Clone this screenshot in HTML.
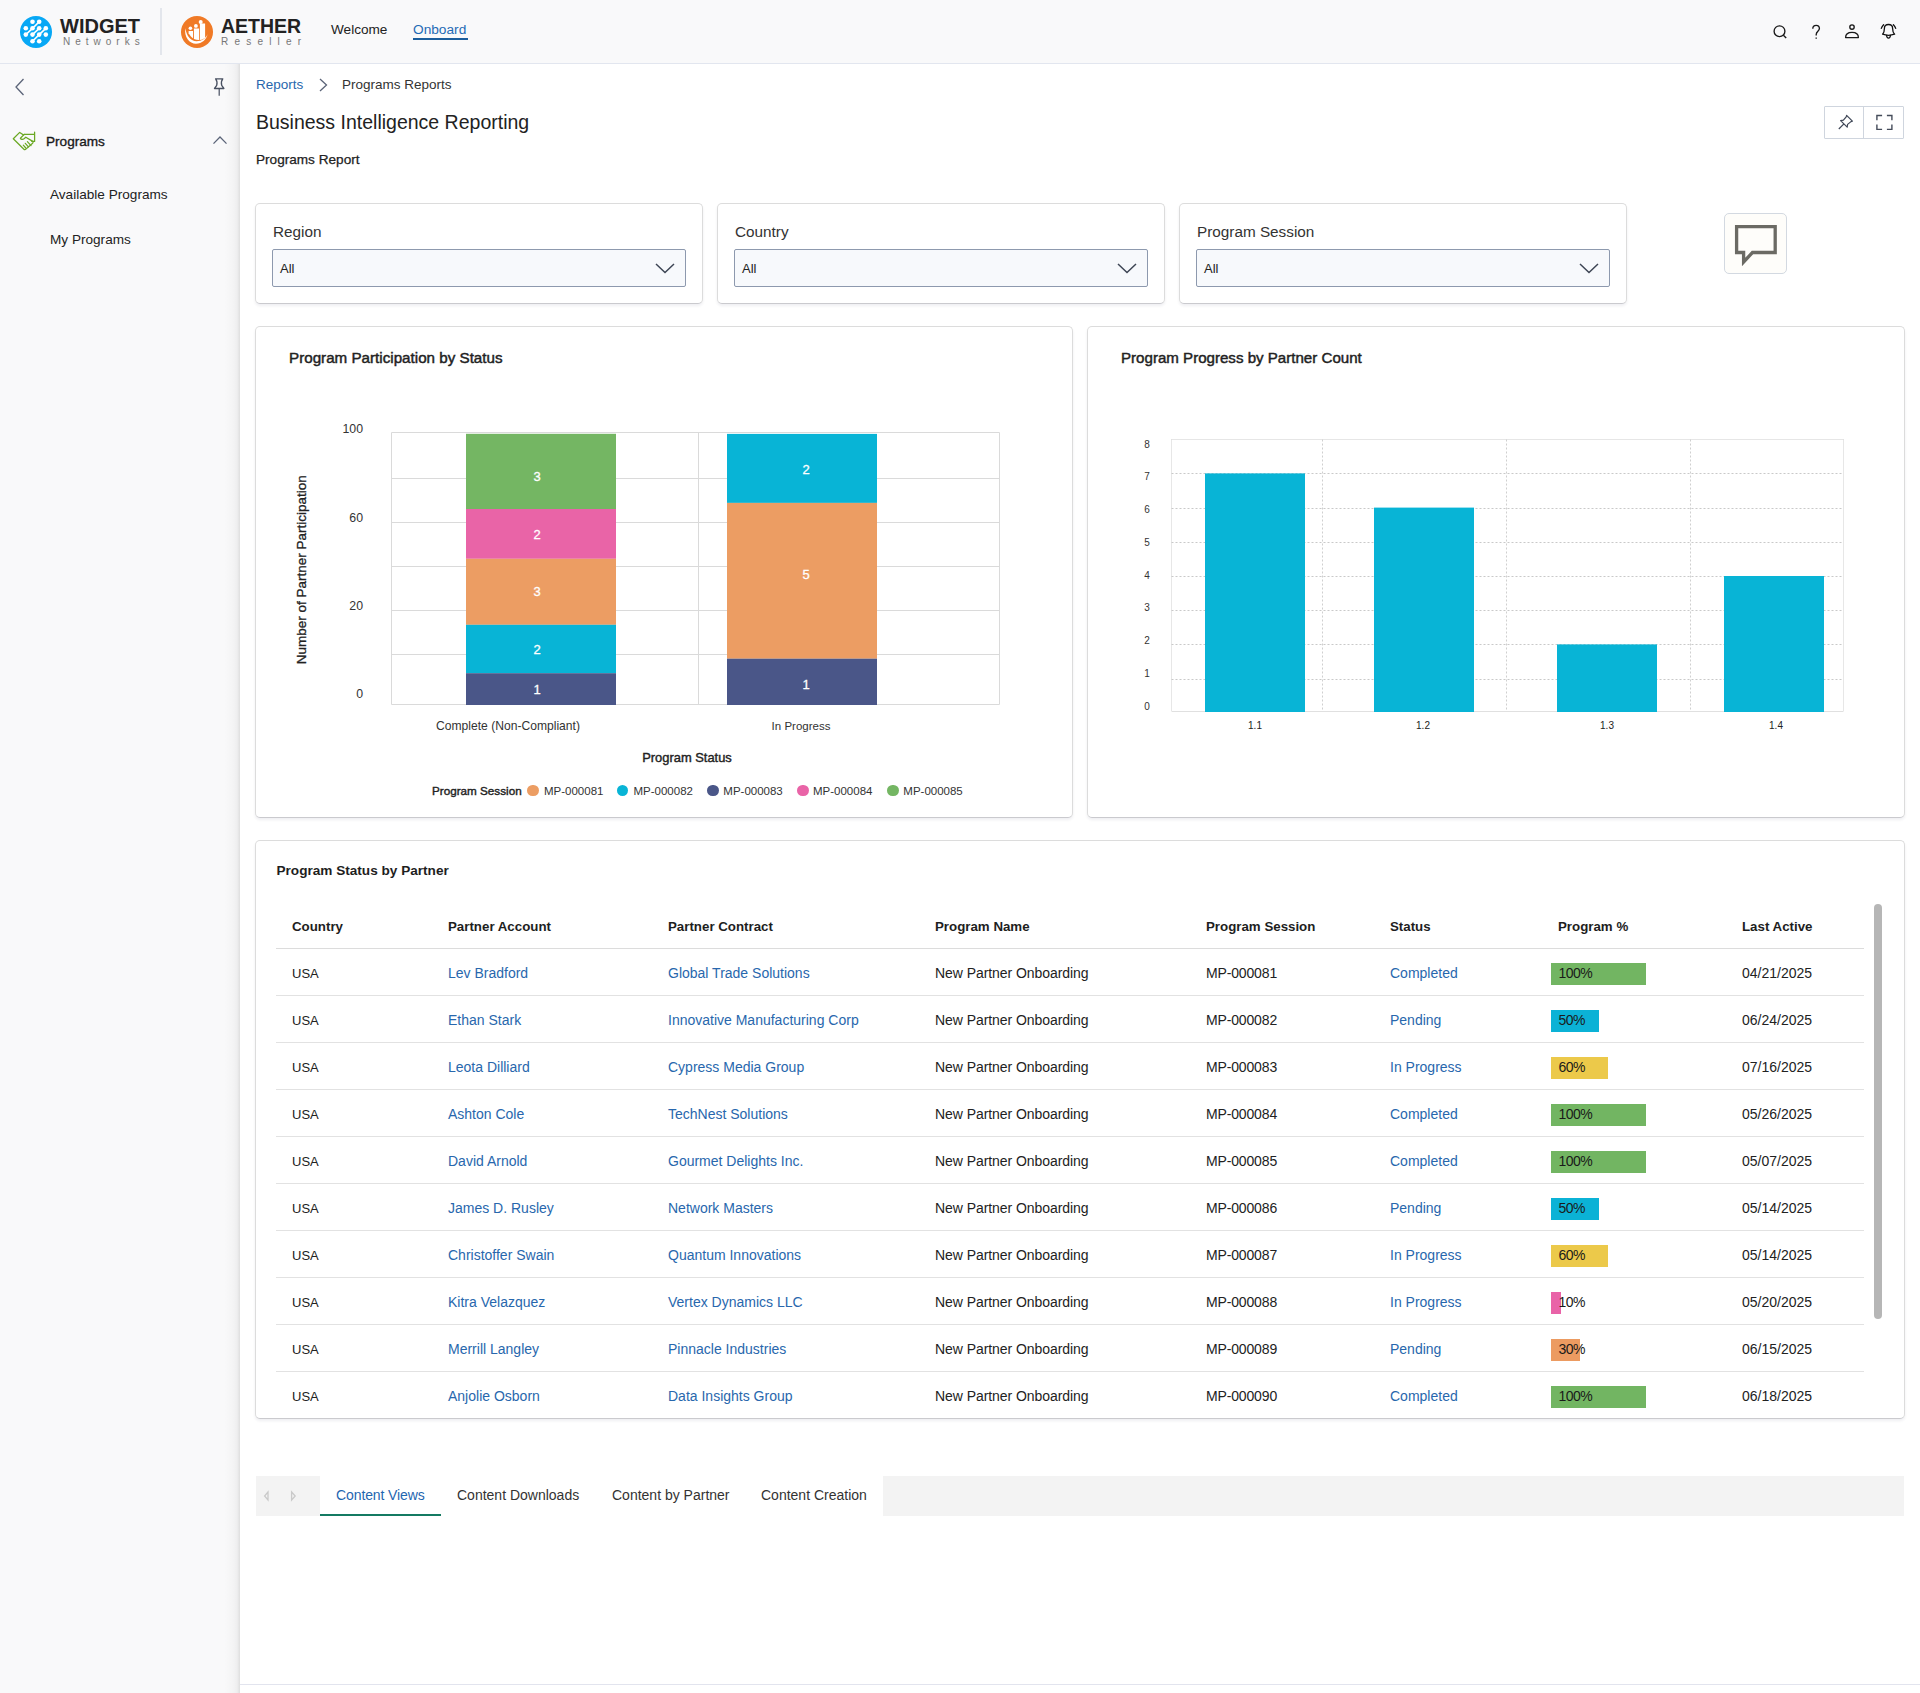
<!DOCTYPE html>
<html><head><meta charset="utf-8">
<style>
*{box-sizing:border-box;margin:0;padding:0}
html,body{width:1920px;height:1693px;overflow:hidden;background:#fff;font-family:"Liberation Sans",sans-serif;color:#222}
.abs{position:absolute}
#header{position:absolute;left:0;top:0;width:1920px;height:64px;background:#f9f9fa;border-bottom:1px solid #e2e6ef}
#sidebar{position:absolute;left:0;top:64px;width:240px;height:1629px;background:#f9f9fa}
#sbshadow{position:absolute;left:224px;top:64px;width:16px;height:1629px;background:linear-gradient(to right,rgba(0,0,0,0),rgba(0,0,0,.02) 55%,rgba(0,0,0,.045) 82%,rgba(0,0,0,.11))}
.t{position:absolute;white-space:nowrap;line-height:1}
.card{position:absolute;background:#fff;border:1px solid #dcdcdc;border-bottom-color:#cacace;border-radius:5px;box-shadow:0 2px 3px rgba(30,30,70,.07)}
.sel{position:absolute;left:16px;top:45px;height:38px;background:#f7f9fc;border:1px solid #8d99ae;border-radius:2px}
.sel span{position:absolute;left:7px;top:11px;font-size:13px;color:#222}
.sel svg{position:absolute;right:10px;top:13px}
.flabel{position:absolute;left:17px;top:19.6px;font-size:15.3px;color:#333;line-height:1;white-space:nowrap}
</style></head><body>
<div id="header">
  <svg class="abs" style="left:20px;top:16px" width="32" height="32" viewBox="0 0 32 32">
    <circle cx="16" cy="16" r="16" fill="#08a8f5"/>
    <g stroke="#fff" stroke-width="1.6" fill="none">
      <path d="M5.8 18.6 L12.5 12.3 L19.2 5.7"/>
      <path d="M12.5 25.2 L19.2 18.6 L25.8 12.3"/>
      <path d="M12.5 18.6 L19.2 12.3"/>
    </g>
    <g fill="#fff">
      <circle cx="12.5" cy="5.7" r="2.3"/><circle cx="19.2" cy="5.7" r="2.3"/>
      <circle cx="5.8" cy="12.3" r="2.3"/><circle cx="12.5" cy="12.3" r="2.3"/><circle cx="19.2" cy="12.3" r="2.3"/><circle cx="25.8" cy="12.3" r="2.3"/>
      <circle cx="5.8" cy="18.6" r="2.3"/><circle cx="12.5" cy="18.6" r="2.3"/><circle cx="19.2" cy="18.6" r="2.3"/><circle cx="25.8" cy="18.6" r="2.3"/>
      <circle cx="12.5" cy="25.2" r="2.3"/><circle cx="19.2" cy="25.2" r="2.3"/>
    </g>
  </svg>
  <div class="t" style="left:60px;top:16px;font-size:20px;font-weight:bold;color:#222">WIDGET</div>
  <div class="t" style="left:63px;top:37px;font-size:10px;letter-spacing:5px;color:#777">Networks</div>
  <div class="abs" style="left:160px;top:8px;width:2px;height:47px;background:#e3e6ec"></div>
  <svg class="abs" style="left:181px;top:16px" width="32" height="32" viewBox="0 0 32 32">
    <circle cx="16" cy="16" r="16" fill="#f07a26"/>
    <path d="M4.4 12.3 C2.8 21 8.5 27.8 15 27.8 C21 27.8 25.5 23.5 26.7 17.8 C25 22.4 21 25.2 15.5 25.2 C10 25.2 5.6 20.5 4.4 12.3Z" fill="#fff"/>
    <g fill="#fff">
      <path d="M7.6 15.1 H12 V22.2 C10.2 20.8 8.6 19 7.6 17.2Z"/>
      <path d="M12.9 12.4 H18.1 V24 C16.2 24 14.5 23.6 12.9 23Z"/>
      <path d="M18.9 7.4 H24.1 V21.8 C22.8 23 21 23.8 18.9 24Z"/>
      <circle cx="9.4" cy="12.3" r="1.8"/><circle cx="14.9" cy="9.9" r="1.9"/><circle cx="19.7" cy="6" r="2"/>
    </g>
  </svg>
  <div class="t" style="left:221px;top:16.5px;font-size:19.5px;font-weight:bold;color:#222">AETHER</div>
  <div class="t" style="left:221px;top:37px;font-size:10px;letter-spacing:6.2px;color:#777">Reseller</div>
  <div class="t" style="left:331px;top:22.5px;font-size:13.6px;color:#222">Welcome</div>
  <div class="t" style="left:413px;top:22.5px;font-size:13.7px;color:#1f6ab5">Onboard</div>
  <div class="abs" style="left:413px;top:38px;width:55px;height:2px;background:#1b5d9c"></div>
  <!-- right icons -->
  <svg class="abs" style="left:1770px;top:22px" width="20" height="20" viewBox="0 0 20 20" fill="none" stroke="#1a1a1a" stroke-width="1.35">
    <circle cx="9.5" cy="9.2" r="5.4"/><path d="M13.4 13.2 L16.2 16"/>
  </svg>
  <svg class="abs" style="left:1806px;top:22px" width="20" height="20" viewBox="0 0 20 20" fill="none" stroke="#1a1a1a" stroke-width="1.35">
    <path d="M6.8 6.8 C6.8 4.6 8.3 3.4 10.2 3.4 C12.2 3.4 13.4 4.8 13.4 6.6 C13.4 9 10.2 9.6 10.2 12.4 V13.4"/><path d="M10.2 15.6 V16.8"/>
  </svg>
  <svg class="abs" style="left:1842px;top:22px" width="20" height="20" viewBox="0 0 20 20" fill="none" stroke="#1a1a1a" stroke-width="1.35">
    <circle cx="10" cy="5" r="2.2"/><path d="M3.6 15.6 C3.6 11.6 6.6 10.4 10 10.4 C13.4 10.4 16.4 11.6 16.4 15.6 Z" stroke-linejoin="round"/>
  </svg>
  <svg class="abs" style="left:1876px;top:18px" width="26" height="26" viewBox="1876 18 26 26" fill="none" stroke="#111" stroke-width="1.3" stroke-linejoin="round" stroke-linecap="round">
    <path d="M1882.6 34.2 C1884 32.6 1884.4 30 1884.4 28.4 C1884.4 25.9 1886 24.5 1888.5 24.5 C1891 24.5 1892.6 25.9 1892.6 28.4 C1892.6 30 1893 32.6 1894.6 34.2 C1891 35.5 1886 35.5 1882.6 34.2Z"/>
    <path d="M1886.6 35.3 C1886.7 37.1 1887.4 38.1 1888.5 38.1 C1889.6 38.1 1890.3 37.1 1890.4 35.3"/>
    <path d="M1883.6 24.7 C1882.6 25.7 1881.7 27 1881.3 28.4 M1893.4 24.7 C1894.4 25.7 1895.3 27 1895.7 28.4"/>
  </svg>
</div>
<div id="sidebar">
  <svg class="abs" style="left:14px;top:14px" width="12" height="18" viewBox="0 0 12 18" fill="none" stroke="#5b6478" stroke-width="1.3"><path d="M9.5 1 L2 9 L9.5 17"/></svg>
  <svg class="abs" style="left:205px;top:8px" width="30" height="30" viewBox="205 72 30 30" fill="none" stroke="#485061" stroke-width="1.3" stroke-linejoin="round">
    <path d="M215.6 78.8 H222.8 C221.5 80.4 221.2 83.6 221.7 85.4 L223.9 88.5 H214.5 L216.7 85.4 C217.2 83.6 216.9 80.4 215.6 78.8Z"/>
    <path d="M219.2 88.8 V95.8" stroke-width="1.2"/>
  </svg>
  <svg class="abs" style="left:8px;top:62px" width="32" height="30" viewBox="8 126 32 30" fill="none" stroke="#6aa823" stroke-width="1.25" stroke-linejoin="round" stroke-linecap="round">
    <path d="M23.6 135.1 L19.7 132.4 L13.3 138.8 L23.9 149.2 C24.5 149.8 25.4 149.7 25.9 149.1 L32.6 143.3 C33.3 142.6 33.2 141.7 32.4 141.1 L25.8 137.3"/>
    <path d="M24.2 134.4 L20.4 138.3 C21.2 139.5 22.8 139.7 24 138.8 L25.8 137.3"/>
    <path d="M24.2 134.3 H34.5 M34.6 132 V141.4 H31.8"/>
    <path d="M23.3 145.2 L25.8 148 M25.3 143.3 L28.4 146.8 M27.4 141.6 L31 145.6"/>
  </svg>
  <div class="t" style="left:46px;top:71px;font-size:13.6px;color:#1a1a1a;-webkit-text-stroke:.35px #1a1a1a">Programs</div>
  <svg class="abs" style="left:212px;top:71px" width="16" height="10" viewBox="0 0 16 10" fill="none" stroke="#5b6478" stroke-width="1.3"><path d="M1.5 8.6 L8 2 L14.5 8.6"/></svg>
  <div class="t" style="left:50px;top:124px;font-size:13.6px;color:#222">Available Programs</div>
  <div class="t" style="left:50px;top:169px;font-size:13.6px;color:#222">My Programs</div>
</div>

<div id="sbshadow"></div>
<div class="abs" style="left:240px;top:64px;width:1680px;height:1629px;background:#fff"></div>
<!-- breadcrumb -->
<div class="t" style="left:256px;top:78px;font-size:13.5px;color:#2867ad">Reports</div>
<svg class="abs" style="left:316px;top:77px" width="14" height="16" viewBox="0 0 14 16" fill="none" stroke="#5b6478" stroke-width="1.3"><path d="M4 2 L10.5 8 L4 14"/></svg>
<div class="t" style="left:342px;top:78px;font-size:13.5px;color:#333">Programs Reports</div>
<div class="t" style="left:256px;top:113px;font-size:19.5px;color:#222">Business Intelligence Reporting</div>
<div class="t" style="left:256px;top:152.5px;font-size:13.6px;color:#222;-webkit-text-stroke:.25px #222">Programs Report</div>
<!-- pin/expand -->
<div class="abs" style="left:1824px;top:106px;width:80px;height:33px;border:1px solid #cfd5de;border-radius:1px;background:#fff"></div>
<div class="abs" style="left:1863px;top:107px;width:1px;height:31px;background:#cfd5de"></div>
<svg class="abs" style="left:1835px;top:113px" width="20" height="20" viewBox="0 0 20 20" fill="none" stroke="#3e4656" stroke-width="1.2" stroke-linejoin="round">
  <path d="M11.6 2.4 L17.4 8.2 L16 8.6 L12.6 11.4 L12.2 14.2 L5.6 7.6 L8.4 7.2 L11.2 3.8 Z"/><path d="M8.9 10.9 L3.8 16"/>
</svg>
<svg class="abs" style="left:1874px;top:112px" width="20" height="20" viewBox="0 0 20 20" fill="none" stroke="#454c5a" stroke-width="1.4">
  <path d="M2.9 8.3 V3.5 H8.1 M12.9 3.5 H17.9 V8.3 M17.9 12.6 V17.4 H12.9 M8.1 17.4 H2.9 V12.6"/>
</svg>
<!-- filters -->
<div class="card" style="left:255px;top:203px;width:448px;height:101px">
  <div class="flabel">Region</div>
  <div class="sel" style="width:414px"><span>All</span><svg width="20" height="11" viewBox="0 0 20 11" fill="none" stroke="#3d4554" stroke-width="1.5"><path d="M1 1 L10 9.5 L19 1"/></svg></div>
</div>
<div class="card" style="left:717px;top:203px;width:448px;height:101px">
  <div class="flabel">Country</div>
  <div class="sel" style="width:414px"><span>All</span><svg width="20" height="11" viewBox="0 0 20 11" fill="none" stroke="#3d4554" stroke-width="1.5"><path d="M1 1 L10 9.5 L19 1"/></svg></div>
</div>
<div class="card" style="left:1179px;top:203px;width:448px;height:101px">
  <div class="flabel">Program Session</div>
  <div class="sel" style="width:414px"><span>All</span><svg width="20" height="11" viewBox="0 0 20 11" fill="none" stroke="#3d4554" stroke-width="1.5"><path d="M1 1 L10 9.5 L19 1"/></svg></div>
</div>
<div class="abs" style="left:1724px;top:213px;width:63px;height:61px;border:1px solid #d3d9e1;border-radius:5px;background:#fefdfa"></div>
<svg class="abs" style="left:1724px;top:213px" width="63" height="61" viewBox="1724 213 63 61" fill="none" stroke="#6b6a64" stroke-width="3.3" stroke-linejoin="miter">
  <path d="M1736.6 226.6 H1775.2 V252.5 H1752.5 L1743.6 262 V252.5 H1736.6 Z"/>
</svg>
<div class="card" style="left:255px;top:326px;width:818px;height:492px"></div>
<div class="t" style="left:289px;top:350px;font-size:15.2px;color:#222;-webkit-text-stroke:.45px #222">Program Participation by Status</div>
<svg class="abs" style="left:256px;top:326px" width="817" height="491" viewBox="256 326 817 491">
<line x1="391.5" y1="432.5" x2="999.5" y2="432.5" stroke="#dadada" stroke-width="1"/>
<line x1="391.5" y1="478.5" x2="999.5" y2="478.5" stroke="#dadada" stroke-width="1"/>
<line x1="391.5" y1="522.5" x2="999.5" y2="522.5" stroke="#dadada" stroke-width="1"/>
<line x1="391.5" y1="566.5" x2="999.5" y2="566.5" stroke="#dadada" stroke-width="1"/>
<line x1="391.5" y1="610.5" x2="999.5" y2="610.5" stroke="#dadada" stroke-width="1"/>
<line x1="391.5" y1="654.5" x2="999.5" y2="654.5" stroke="#dadada" stroke-width="1"/>
<line x1="391.5" y1="704.5" x2="999.5" y2="704.5" stroke="#dadada" stroke-width="1"/>
<line x1="391.5" y1="432.5" x2="391.5" y2="704.5" stroke="#dadada" stroke-width="1"/>
<line x1="698.5" y1="432.5" x2="698.5" y2="704.5" stroke="#dadada" stroke-width="1"/>
<line x1="999.5" y1="432.5" x2="999.5" y2="704.5" stroke="#dadada" stroke-width="1"/>
<rect x="466" y="433.8" width="150" height="75.19999999999999" fill="#74b663"/>
<rect x="466" y="509" width="150" height="49.799999999999955" fill="#e964a7"/>
<rect x="466" y="558.8" width="150" height="66.0" fill="#ec9d63"/>
<rect x="466" y="624.8" width="150" height="48.40000000000009" fill="#08b4d6"/>
<rect x="466" y="673.2" width="150" height="31.799999999999955" fill="#4a5688"/>
<rect x="727" y="433.9" width="150" height="69.0" fill="#08b4d6"/>
<rect x="727" y="502.9" width="150" height="155.80000000000007" fill="#ec9d63"/>
<rect x="727" y="658.7" width="150" height="46.299999999999955" fill="#4a5688"/>
</svg>
<div class="t" style="left:529px;top:469.5px;width:16px;text-align:center;font-size:13px;color:#fff;-webkit-text-stroke:.3px #fff">3</div>
<div class="t" style="left:529px;top:527.5px;width:16px;text-align:center;font-size:13px;color:#fff;-webkit-text-stroke:.3px #fff">2</div>
<div class="t" style="left:529px;top:584.5px;width:16px;text-align:center;font-size:13px;color:#fff;-webkit-text-stroke:.3px #fff">3</div>
<div class="t" style="left:529px;top:642.5px;width:16px;text-align:center;font-size:13px;color:#fff;-webkit-text-stroke:.3px #fff">2</div>
<div class="t" style="left:529px;top:682.5px;width:16px;text-align:center;font-size:13px;color:#fff;-webkit-text-stroke:.3px #fff">1</div>
<div class="t" style="left:798px;top:463.0px;width:16px;text-align:center;font-size:13px;color:#fff;-webkit-text-stroke:.3px #fff">2</div>
<div class="t" style="left:798px;top:568.3px;width:16px;text-align:center;font-size:13px;color:#fff;-webkit-text-stroke:.3px #fff">5</div>
<div class="t" style="left:798px;top:678.3px;width:16px;text-align:center;font-size:13px;color:#fff;-webkit-text-stroke:.3px #fff">1</div>
<div class="t" style="left:313px;top:423.0px;width:50px;text-align:right;font-size:12.3px;color:#333">100</div>
<div class="t" style="left:313px;top:511.7px;width:50px;text-align:right;font-size:12.3px;color:#333">60</div>
<div class="t" style="left:313px;top:600.1px;width:50px;text-align:right;font-size:12.3px;color:#333">20</div>
<div class="t" style="left:313px;top:688.2px;width:50px;text-align:right;font-size:12.3px;color:#333">0</div>
<div class="t" style="left:202px;top:563px;width:200px;text-align:center;font-size:13.5px;color:#222;-webkit-text-stroke:.3px #222;transform:rotate(-90deg)">Number of Partner Participation</div>
<div class="t" style="left:408px;top:720px;width:200px;text-align:center;font-size:12.1px;color:#333">Complete (Non-Compliant)</div>
<div class="t" style="left:701px;top:721px;width:200px;text-align:center;font-size:11.5px;color:#333">In Progress</div>
<div class="t" style="left:587px;top:751.5px;width:200px;text-align:center;font-size:12.9px;color:#222;-webkit-text-stroke:.4px #222">Program Status</div>
<div class="t" style="left:432px;top:785px;font-size:11.7px;color:#222;-webkit-text-stroke:.4px #222">Program Session</div>
<div class="abs" style="left:527.4px;top:784.6px;width:11.6px;height:11.6px;border-radius:50%;background:#ec9d63"></div>
<div class="t" style="left:544px;top:785.5px;font-size:11.5px;color:#333">MP-000081</div>
<div class="abs" style="left:616.9px;top:784.6px;width:11.6px;height:11.6px;border-radius:50%;background:#08b4d6"></div>
<div class="t" style="left:633.5px;top:785.5px;font-size:11.5px;color:#333">MP-000082</div>
<div class="abs" style="left:707.2px;top:784.6px;width:11.6px;height:11.6px;border-radius:50%;background:#4a5688"></div>
<div class="t" style="left:723.3px;top:785.5px;font-size:11.5px;color:#333">MP-000083</div>
<div class="abs" style="left:797.2px;top:784.6px;width:11.6px;height:11.6px;border-radius:50%;background:#e964a7"></div>
<div class="t" style="left:813px;top:785.5px;font-size:11.5px;color:#333">MP-000084</div>
<div class="abs" style="left:887.2px;top:784.6px;width:11.6px;height:11.6px;border-radius:50%;background:#74b663"></div>
<div class="t" style="left:903.3px;top:785.5px;font-size:11.5px;color:#333">MP-000085</div>
<div class="card" style="left:1087px;top:326px;width:818px;height:492px"></div>
<div class="t" style="left:1121px;top:350px;font-size:15.1px;color:#222;-webkit-text-stroke:.45px #222">Program Progress by Partner Count</div>
<svg class="abs" style="left:1088px;top:326px" width="817" height="491" viewBox="1088 326 817 491">
<line x1="1171.5" y1="439.5" x2="1843.5" y2="439.5" stroke="#e6e6e6" stroke-width="1"/>
<line x1="1171.5" y1="473.5" x2="1843.5" y2="473.5" stroke="#c9c9c9" stroke-width="1" stroke-dasharray="2 2"/>
<line x1="1171.5" y1="508.5" x2="1843.5" y2="508.5" stroke="#c9c9c9" stroke-width="1" stroke-dasharray="2 2"/>
<line x1="1171.5" y1="542.5" x2="1843.5" y2="542.5" stroke="#c9c9c9" stroke-width="1" stroke-dasharray="2 2"/>
<line x1="1171.5" y1="576.5" x2="1843.5" y2="576.5" stroke="#c9c9c9" stroke-width="1" stroke-dasharray="2 2"/>
<line x1="1171.5" y1="610.5" x2="1843.5" y2="610.5" stroke="#c9c9c9" stroke-width="1" stroke-dasharray="2 2"/>
<line x1="1171.5" y1="644.5" x2="1843.5" y2="644.5" stroke="#c9c9c9" stroke-width="1" stroke-dasharray="2 2"/>
<line x1="1171.5" y1="679.5" x2="1843.5" y2="679.5" stroke="#c9c9c9" stroke-width="1" stroke-dasharray="2 2"/>
<line x1="1171.5" y1="711.5" x2="1843.5" y2="711.5" stroke="#e0e0e0" stroke-width="1"/>
<line x1="1171.5" y1="439.5" x2="1171.5" y2="711.5" stroke="#cfcfcf" stroke-width="1" stroke-dasharray="1 1"/>
<line x1="1322.5" y1="439.5" x2="1322.5" y2="711.5" stroke="#cfcfcf" stroke-width="1" stroke-dasharray="2 2"/>
<line x1="1506.5" y1="439.5" x2="1506.5" y2="711.5" stroke="#cfcfcf" stroke-width="1" stroke-dasharray="2 2"/>
<line x1="1690.5" y1="439.5" x2="1690.5" y2="711.5" stroke="#cfcfcf" stroke-width="1" stroke-dasharray="2 2"/>
<line x1="1843.5" y1="439.5" x2="1843.5" y2="711.5" stroke="#cfcfcf" stroke-width="1" stroke-dasharray="1 1"/>
<rect x="1205" y="473.4" width="100" height="238.60000000000002" fill="#08b4d6"/>
<rect x="1374" y="507.6" width="100" height="204.39999999999998" fill="#08b4d6"/>
<rect x="1557" y="644.4" width="100" height="67.60000000000002" fill="#08b4d6"/>
<rect x="1724" y="576.0" width="100" height="136.0" fill="#08b4d6"/>
</svg>
<div class="t" style="left:1137px;top:439.6px;width:20px;text-align:center;font-size:10px;color:#333">8</div>
<div class="t" style="left:1137px;top:472.3px;width:20px;text-align:center;font-size:10px;color:#333">7</div>
<div class="t" style="left:1137px;top:505.1px;width:20px;text-align:center;font-size:10px;color:#333">6</div>
<div class="t" style="left:1137px;top:537.8px;width:20px;text-align:center;font-size:10px;color:#333">5</div>
<div class="t" style="left:1137px;top:570.5px;width:20px;text-align:center;font-size:10px;color:#333">4</div>
<div class="t" style="left:1137px;top:603.3px;width:20px;text-align:center;font-size:10px;color:#333">3</div>
<div class="t" style="left:1137px;top:636.0px;width:20px;text-align:center;font-size:10px;color:#333">2</div>
<div class="t" style="left:1137px;top:668.8px;width:20px;text-align:center;font-size:10px;color:#333">1</div>
<div class="t" style="left:1137px;top:701.5px;width:20px;text-align:center;font-size:10px;color:#333">0</div>
<div class="t" style="left:1235px;top:720.5px;width:40px;text-align:center;font-size:10px;color:#222">1.1</div>
<div class="t" style="left:1403px;top:720.5px;width:40px;text-align:center;font-size:10px;color:#222">1.2</div>
<div class="t" style="left:1587px;top:720.5px;width:40px;text-align:center;font-size:10px;color:#222">1.3</div>
<div class="t" style="left:1756px;top:720.5px;width:40px;text-align:center;font-size:10px;color:#222">1.4</div>
<div class="card" style="left:255px;top:840px;width:1650px;height:579px"></div>
<div class="t" style="left:276.5px;top:864px;font-size:13.6px;font-weight:bold;color:#1e1e1e">Program Status by Partner</div>
<div class="t" style="left:292px;top:919.5px;font-size:13.3px;font-weight:bold;color:#1e1e1e">Country</div>
<div class="t" style="left:448px;top:919.5px;font-size:13.3px;font-weight:bold;color:#1e1e1e">Partner Account</div>
<div class="t" style="left:668px;top:919.5px;font-size:13.3px;font-weight:bold;color:#1e1e1e">Partner Contract</div>
<div class="t" style="left:935px;top:919.5px;font-size:13.3px;font-weight:bold;color:#1e1e1e">Program Name</div>
<div class="t" style="left:1206px;top:919.5px;font-size:13.3px;font-weight:bold;color:#1e1e1e">Program Session</div>
<div class="t" style="left:1390px;top:919.5px;font-size:13.3px;font-weight:bold;color:#1e1e1e">Status</div>
<div class="t" style="left:1558px;top:919.5px;font-size:13.3px;font-weight:bold;color:#1e1e1e">Program %</div>
<div class="t" style="left:1742px;top:919.5px;font-size:13.3px;font-weight:bold;color:#1e1e1e">Last Active</div>
<div class="abs" style="left:276px;top:948px;width:1588px;height:1px;background:#dcdcdc"></div>
<div class="t" style="left:292px;top:967.3px;font-size:13px;color:#222">USA</div>
<div class="t" style="left:448px;top:966.3px;font-size:14px;color:#2867ad">Lev Bradford</div>
<div class="t" style="left:668px;top:966.3px;font-size:14px;color:#2867ad">Global Trade Solutions</div>
<div class="t" style="left:935px;top:966.3px;font-size:14px;letter-spacing:-.06px;color:#222">New Partner Onboarding</div>
<div class="t" style="left:1206px;top:966.3px;font-size:14px;letter-spacing:-.15px;color:#222">MP-000081</div>
<div class="t" style="left:1390px;top:966.3px;font-size:14px;color:#2867ad">Completed</div>
<div class="abs" style="left:1551px;top:962.9px;width:95px;height:22px;background:#72b562"></div>
<div class="t" style="left:1558.5px;top:966.3px;font-size:14px;letter-spacing:-.55px;color:#1a1a1a">100%</div>
<div class="t" style="left:1742px;top:966.3px;font-size:14px;color:#222">04/21/2025</div>
<div class="abs" style="left:276px;top:995px;width:1588px;height:1px;background:#e2e2e2"></div>
<div class="t" style="left:292px;top:1014.3px;font-size:13px;color:#222">USA</div>
<div class="t" style="left:448px;top:1013.3px;font-size:14px;color:#2867ad">Ethan Stark</div>
<div class="t" style="left:668px;top:1013.3px;font-size:14px;color:#2867ad">Innovative Manufacturing Corp</div>
<div class="t" style="left:935px;top:1013.3px;font-size:14px;letter-spacing:-.06px;color:#222">New Partner Onboarding</div>
<div class="t" style="left:1206px;top:1013.3px;font-size:14px;letter-spacing:-.15px;color:#222">MP-000082</div>
<div class="t" style="left:1390px;top:1013.3px;font-size:14px;color:#2867ad">Pending</div>
<div class="abs" style="left:1551px;top:1009.9px;width:47.5px;height:22px;background:#0bb2d6"></div>
<div class="t" style="left:1558.5px;top:1013.3px;font-size:14px;letter-spacing:-.55px;color:#1a1a1a">50%</div>
<div class="t" style="left:1742px;top:1013.3px;font-size:14px;color:#222">06/24/2025</div>
<div class="abs" style="left:276px;top:1042px;width:1588px;height:1px;background:#e2e2e2"></div>
<div class="t" style="left:292px;top:1061.3px;font-size:13px;color:#222">USA</div>
<div class="t" style="left:448px;top:1060.3px;font-size:14px;color:#2867ad">Leota Dilliard</div>
<div class="t" style="left:668px;top:1060.3px;font-size:14px;color:#2867ad">Cypress Media Group</div>
<div class="t" style="left:935px;top:1060.3px;font-size:14px;letter-spacing:-.06px;color:#222">New Partner Onboarding</div>
<div class="t" style="left:1206px;top:1060.3px;font-size:14px;letter-spacing:-.15px;color:#222">MP-000083</div>
<div class="t" style="left:1390px;top:1060.3px;font-size:14px;color:#2867ad">In Progress</div>
<div class="abs" style="left:1551px;top:1056.9px;width:57px;height:22px;background:#ecc94a"></div>
<div class="t" style="left:1558.5px;top:1060.3px;font-size:14px;letter-spacing:-.55px;color:#1a1a1a">60%</div>
<div class="t" style="left:1742px;top:1060.3px;font-size:14px;color:#222">07/16/2025</div>
<div class="abs" style="left:276px;top:1089px;width:1588px;height:1px;background:#e2e2e2"></div>
<div class="t" style="left:292px;top:1108.3px;font-size:13px;color:#222">USA</div>
<div class="t" style="left:448px;top:1107.3px;font-size:14px;color:#2867ad">Ashton Cole</div>
<div class="t" style="left:668px;top:1107.3px;font-size:14px;color:#2867ad">TechNest Solutions</div>
<div class="t" style="left:935px;top:1107.3px;font-size:14px;letter-spacing:-.06px;color:#222">New Partner Onboarding</div>
<div class="t" style="left:1206px;top:1107.3px;font-size:14px;letter-spacing:-.15px;color:#222">MP-000084</div>
<div class="t" style="left:1390px;top:1107.3px;font-size:14px;color:#2867ad">Completed</div>
<div class="abs" style="left:1551px;top:1103.9px;width:95px;height:22px;background:#72b562"></div>
<div class="t" style="left:1558.5px;top:1107.3px;font-size:14px;letter-spacing:-.55px;color:#1a1a1a">100%</div>
<div class="t" style="left:1742px;top:1107.3px;font-size:14px;color:#222">05/26/2025</div>
<div class="abs" style="left:276px;top:1136px;width:1588px;height:1px;background:#e2e2e2"></div>
<div class="t" style="left:292px;top:1155.3px;font-size:13px;color:#222">USA</div>
<div class="t" style="left:448px;top:1154.3px;font-size:14px;color:#2867ad">David Arnold</div>
<div class="t" style="left:668px;top:1154.3px;font-size:14px;color:#2867ad">Gourmet Delights Inc.</div>
<div class="t" style="left:935px;top:1154.3px;font-size:14px;letter-spacing:-.06px;color:#222">New Partner Onboarding</div>
<div class="t" style="left:1206px;top:1154.3px;font-size:14px;letter-spacing:-.15px;color:#222">MP-000085</div>
<div class="t" style="left:1390px;top:1154.3px;font-size:14px;color:#2867ad">Completed</div>
<div class="abs" style="left:1551px;top:1150.9px;width:95px;height:22px;background:#72b562"></div>
<div class="t" style="left:1558.5px;top:1154.3px;font-size:14px;letter-spacing:-.55px;color:#1a1a1a">100%</div>
<div class="t" style="left:1742px;top:1154.3px;font-size:14px;color:#222">05/07/2025</div>
<div class="abs" style="left:276px;top:1183px;width:1588px;height:1px;background:#e2e2e2"></div>
<div class="t" style="left:292px;top:1202.3px;font-size:13px;color:#222">USA</div>
<div class="t" style="left:448px;top:1201.3px;font-size:14px;color:#2867ad">James D. Rusley</div>
<div class="t" style="left:668px;top:1201.3px;font-size:14px;color:#2867ad">Network Masters</div>
<div class="t" style="left:935px;top:1201.3px;font-size:14px;letter-spacing:-.06px;color:#222">New Partner Onboarding</div>
<div class="t" style="left:1206px;top:1201.3px;font-size:14px;letter-spacing:-.15px;color:#222">MP-000086</div>
<div class="t" style="left:1390px;top:1201.3px;font-size:14px;color:#2867ad">Pending</div>
<div class="abs" style="left:1551px;top:1197.9px;width:47.5px;height:22px;background:#0bb2d6"></div>
<div class="t" style="left:1558.5px;top:1201.3px;font-size:14px;letter-spacing:-.55px;color:#1a1a1a">50%</div>
<div class="t" style="left:1742px;top:1201.3px;font-size:14px;color:#222">05/14/2025</div>
<div class="abs" style="left:276px;top:1230px;width:1588px;height:1px;background:#e2e2e2"></div>
<div class="t" style="left:292px;top:1249.3px;font-size:13px;color:#222">USA</div>
<div class="t" style="left:448px;top:1248.3px;font-size:14px;color:#2867ad">Christoffer Swain</div>
<div class="t" style="left:668px;top:1248.3px;font-size:14px;color:#2867ad">Quantum Innovations</div>
<div class="t" style="left:935px;top:1248.3px;font-size:14px;letter-spacing:-.06px;color:#222">New Partner Onboarding</div>
<div class="t" style="left:1206px;top:1248.3px;font-size:14px;letter-spacing:-.15px;color:#222">MP-000087</div>
<div class="t" style="left:1390px;top:1248.3px;font-size:14px;color:#2867ad">In Progress</div>
<div class="abs" style="left:1551px;top:1244.9px;width:57px;height:22px;background:#ecc94a"></div>
<div class="t" style="left:1558.5px;top:1248.3px;font-size:14px;letter-spacing:-.55px;color:#1a1a1a">60%</div>
<div class="t" style="left:1742px;top:1248.3px;font-size:14px;color:#222">05/14/2025</div>
<div class="abs" style="left:276px;top:1277px;width:1588px;height:1px;background:#e2e2e2"></div>
<div class="t" style="left:292px;top:1296.3px;font-size:13px;color:#222">USA</div>
<div class="t" style="left:448px;top:1295.3px;font-size:14px;color:#2867ad">Kitra Velazquez</div>
<div class="t" style="left:668px;top:1295.3px;font-size:14px;color:#2867ad">Vertex Dynamics LLC</div>
<div class="t" style="left:935px;top:1295.3px;font-size:14px;letter-spacing:-.06px;color:#222">New Partner Onboarding</div>
<div class="t" style="left:1206px;top:1295.3px;font-size:14px;letter-spacing:-.15px;color:#222">MP-000088</div>
<div class="t" style="left:1390px;top:1295.3px;font-size:14px;color:#2867ad">In Progress</div>
<div class="abs" style="left:1551px;top:1291.9px;width:9.5px;height:22px;background:#e963a8"></div>
<div class="t" style="left:1558.5px;top:1295.3px;font-size:14px;letter-spacing:-.55px;color:#1a1a1a">10%</div>
<div class="t" style="left:1742px;top:1295.3px;font-size:14px;color:#222">05/20/2025</div>
<div class="abs" style="left:276px;top:1324px;width:1588px;height:1px;background:#e2e2e2"></div>
<div class="t" style="left:292px;top:1343.3px;font-size:13px;color:#222">USA</div>
<div class="t" style="left:448px;top:1342.3px;font-size:14px;color:#2867ad">Merrill Langley</div>
<div class="t" style="left:668px;top:1342.3px;font-size:14px;color:#2867ad">Pinnacle Industries</div>
<div class="t" style="left:935px;top:1342.3px;font-size:14px;letter-spacing:-.06px;color:#222">New Partner Onboarding</div>
<div class="t" style="left:1206px;top:1342.3px;font-size:14px;letter-spacing:-.15px;color:#222">MP-000089</div>
<div class="t" style="left:1390px;top:1342.3px;font-size:14px;color:#2867ad">Pending</div>
<div class="abs" style="left:1551px;top:1338.9px;width:29px;height:22px;background:#ec9b61"></div>
<div class="t" style="left:1558.5px;top:1342.3px;font-size:14px;letter-spacing:-.55px;color:#1a1a1a">30%</div>
<div class="t" style="left:1742px;top:1342.3px;font-size:14px;color:#222">06/15/2025</div>
<div class="abs" style="left:276px;top:1371px;width:1588px;height:1px;background:#e2e2e2"></div>
<div class="t" style="left:292px;top:1390.3px;font-size:13px;color:#222">USA</div>
<div class="t" style="left:448px;top:1389.3px;font-size:14px;color:#2867ad">Anjolie Osborn</div>
<div class="t" style="left:668px;top:1389.3px;font-size:14px;color:#2867ad">Data Insights Group</div>
<div class="t" style="left:935px;top:1389.3px;font-size:14px;letter-spacing:-.06px;color:#222">New Partner Onboarding</div>
<div class="t" style="left:1206px;top:1389.3px;font-size:14px;letter-spacing:-.15px;color:#222">MP-000090</div>
<div class="t" style="left:1390px;top:1389.3px;font-size:14px;color:#2867ad">Completed</div>
<div class="abs" style="left:1551px;top:1385.9px;width:95px;height:22px;background:#72b562"></div>
<div class="t" style="left:1558.5px;top:1389.3px;font-size:14px;letter-spacing:-.55px;color:#1a1a1a">100%</div>
<div class="t" style="left:1742px;top:1389.3px;font-size:14px;color:#222">06/18/2025</div>
<div class="abs" style="left:1874px;top:904px;width:8px;height:415px;border-radius:4px;background:#b6b6b6"></div>
<div class="abs" style="left:256px;top:1476px;width:64px;height:40px;background:#f3f3f3"></div>
<svg class="abs" style="left:256px;top:1476px" width="64" height="40" viewBox="0 0 64 40"><path d="M12 16 L8.6 20 L12 24 Z" fill="none" stroke="#cacaca" stroke-width="1.3"/><path d="M35.6 16 L39.2 20 L35.6 24 Z" fill="none" stroke="#cacaca" stroke-width="1.3"/></svg>
<div class="abs" style="left:883px;top:1476px;width:1021px;height:40px;background:#f3f3f3"></div>
<div class="abs" style="left:320px;top:1513.5px;width:121px;height:2.5px;background:#147a62"></div>
<div class="t" style="left:336px;top:1487.5px;font-size:14px;letter-spacing:-.1px;color:#1f66b0">Content Views</div>
<div class="t" style="left:457px;top:1487.5px;font-size:14px;color:#333">Content Downloads</div>
<div class="t" style="left:612px;top:1487.5px;font-size:14px;color:#333">Content by Partner</div>
<div class="t" style="left:761px;top:1487.5px;font-size:14px;color:#333">Content Creation</div>
<div class="abs" style="left:240px;top:1684px;width:1680px;height:1px;background:#e2e4ee"></div>

</body></html>
